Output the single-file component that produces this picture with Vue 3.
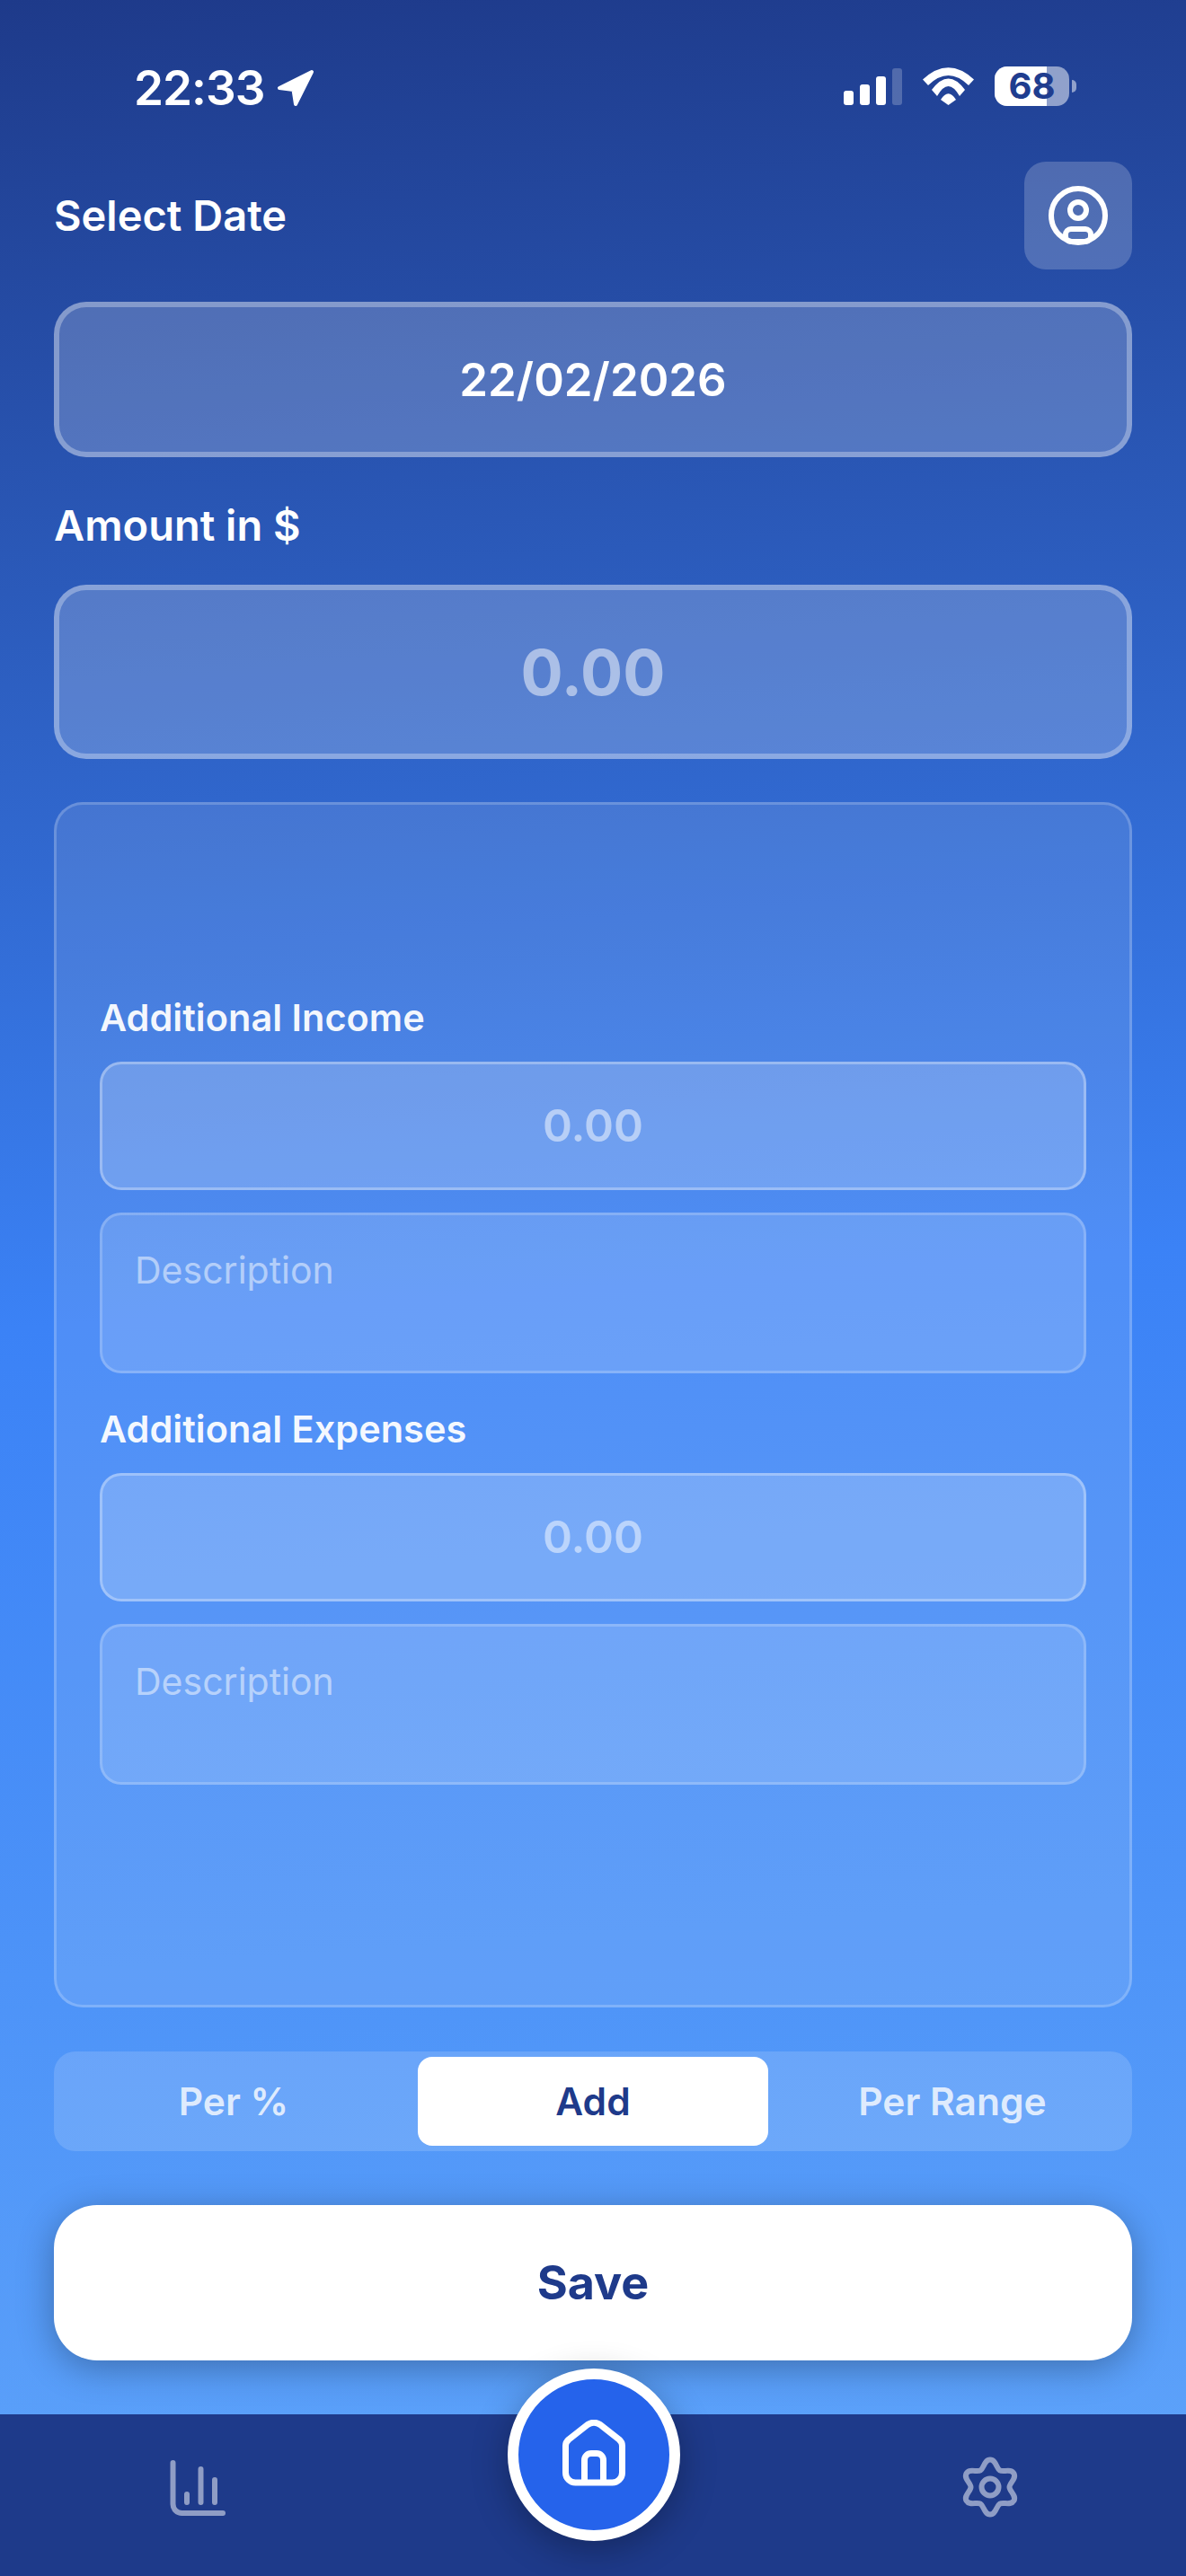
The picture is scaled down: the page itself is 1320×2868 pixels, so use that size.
<script setup>
const points = []
for (let i = 0; i < 12; i++) {
  const angle = (-90 + i * 30) * Math.PI / 180
  const radius = i % 2 === 0 ? 30.5 : 21.5
  points.push({
    x: 36 + radius * Math.cos(angle),
    y: 36 + radius * Math.sin(angle),
    tx: -Math.sin(angle),
    ty: Math.cos(angle),
    h: i % 2 === 0 ? 6.5 : 4.5
  })
}
const f = (n) => n.toFixed(2)
let gearPath = `M${f(points[0].x)} ${f(points[0].y)}`
for (let i = 0; i < 12; i++) {
  const a = points[i]
  const b = points[(i + 1) % 12]
  gearPath += `C${f(a.x + a.tx * a.h)} ${f(a.y + a.ty * a.h)} ${f(b.x - b.tx * b.h)} ${f(b.y - b.ty * b.h)} ${f(b.x)} ${f(b.y)}`
}
gearPath += 'Z'

const modes = [
  { label: 'Per %', active: false },
  { label: 'Add', active: true },
  { label: 'Per Range', active: false }
]
const extras = [
  { title: 'Additional Income' },
  { title: 'Additional Expenses' }
]
</script>

<template>
  <div class="screen">
    <div class="main">
      <header class="status">
        <div class="status-left">
          <span class="time">22:33</span>
          <svg class="arrow" width="44" height="44" viewBox="0 0 44 44">
            <path d="M40 4L4 22L19.5 24L22 40Z" fill="#fff" stroke="#fff" stroke-width="4" stroke-linejoin="round" />
          </svg>
        </div>
        <div class="status-right">
          <div class="signal">
            <i class="bar b1"></i><i class="bar b2"></i><i class="bar b3"></i><i class="bar b4"></i>
          </div>
          <svg class="wifi" width="57" height="42" viewBox="0 0 57 42" fill="#fff">
            <path d="M0 13.5Q28.5-13 57 13.5L51 20Q28.5-2 6 20Z" />
            <path d="M10 25Q28.5 0 47 25L41 32Q28.5 10 16 32Z" />
            <path d="M20 36Q28.5 22.600 37 36L28.500 42Z" />
          </svg>
          <div class="battery">
            <div class="battery-body">
              <div class="battery-fill"></div>
              <span class="battery-text">68</span>
            </div>
            <div class="battery-nub"></div>
          </div>
        </div>
      </header>

      <div class="title-row">
        <span class="label">Select Date</span>
        <button class="profile" aria-label="Profile">
          <svg width="72" height="72" viewBox="0 0 72 72" fill="none" stroke="#fff" stroke-width="6">
            <circle cx="36" cy="36" r="30" />
            <circle cx="36" cy="30" r="9" />
            <rect x="22" y="51" width="28" height="14" rx="6" />
          </svg>
        </button>
      </div>

      <div class="field date">22/02/2026</div>
      <div class="label amount-label">Amount in $</div>
      <div class="field amount">0.00</div>

      <section class="card">
        <div v-for="extra in extras" :key="extra.title" class="extra">
          <div class="extra-title">{{ extra.title }}</div>
          <div class="small-input">0.00</div>
          <div class="description">Description</div>
        </div>
      </section>

      <div class="segments">
        <div v-for="mode in modes" :key="mode.label" class="segment" :class="{ active: mode.active }">{{ mode.label }}</div>
      </div>

      <button class="save">Save</button>
    </div>

    <nav class="tabbar">
      <svg class="tab-icon" width="72" height="72" viewBox="0 0 72 72" fill="none" stroke="#fff" stroke-opacity=".5" stroke-width="6" stroke-linecap="round">
        <path d="M6.500 9V55A10 10 0 0 0 16.500 65H62" />
        <path d="M22 44V53M37.500 16V53M53 28V53" />
      </svg>
      <button class="home" aria-label="Home">
        <svg width="72" height="74" viewBox="0 0 72 74" fill="none" stroke="#fff" stroke-width="7" stroke-linejoin="round">
          <path d="M4.500 29Q4.500 25 8 22L29 5.500Q36 1 43 5.500L64 22Q67.500 25 67.500 29V59A11 11 0 0 1 56.500 70H15.500A11 11 0 0 1 4.500 59Z" />
          <path d="M25.500 70V45A7.500 7.500 0 0 1 33 37.500H39A7.500 7.500 0 0 1 46.500 45V70" />
        </svg>
      </button>
      <svg class="tab-icon" width="72" height="72" viewBox="0 0 72 72" fill="none" stroke="#fff" stroke-opacity=".5" stroke-width="6">
        <path :d="gearPath" />
        <circle cx="36" cy="36" r="9.500" />
      </svg>
    </nav>
  </div>
</template>

<style>
html, body { margin: 0; padding: 0; }
</style>

<style scoped>
.screen {
  width: 1320px;
  height: 2868px;
  display: flex;
  flex-direction: column;
  font-family: Inter, "Liberation Sans", sans-serif;
  color: #fff;
  overflow: hidden;
  background: linear-gradient(176deg, #1e3a8a 0%, #3b82f6 50%, #60a5fa 100%);
}
.main {
  flex: 1;
  padding: 0 60px;
  display: flex;
  flex-direction: column;
}
.status {
  height: 180px;
  display: flex;
  justify-content: space-between;
  box-sizing: border-box;
  padding: 74px 62px 0 89px;
}
.status-left { display: flex; align-items: flex-start; gap: 13px; }
.time {
  font-size: 53px;
  line-height: 48px;
  font-weight: 600;
  letter-spacing: -1px;
}
.arrow { margin-top: 2px; }
.status-right { display: flex; align-items: flex-start; }
.signal {
  display: flex;
  align-items: flex-end;
  gap: 7px;
  height: 41px;
  margin: 2px 23px 0 0;
}
.bar { display: block; width: 11px; background: #fff; border-radius: 3px; }
.b1 { height: 16px; }
.b2 { height: 23px; }
.b3 { height: 32px; }
.b4 { height: 41px; opacity: .22; }
.wifi { margin: 1px 23px 0 0; }
.battery { display: flex; align-items: center; }
.battery-body {
  position: relative;
  width: 83px;
  height: 44px;
  border-radius: 14px;
  background: rgba(255,255,255,.5);
  display: flex;
  align-items: center;
  justify-content: center;
}
.battery-fill {
  position: absolute;
  left: 0;
  top: 0;
  bottom: 0;
  width: 58px;
  border-radius: 14px 0 0 14px;
  background: #fff;
}
.battery-text {
  position: relative;
  font-size: 40px;
  font-weight: 700;
  color: #1f3d8f;
  line-height: 44px;
}
.battery-nub {
  width: 5px;
  height: 14px;
  margin-left: 3px;
  border-radius: 0 5px 5px 0;
  background: rgba(255,255,255,.5);
}
.title-row {
  height: 120px;
  display: flex;
  justify-content: space-between;
  align-items: center;
}
.label {
  font-size: 47px;
  line-height: 56px;
  font-weight: 600;
}
.profile {
  width: 120px;
  height: 120px;
  padding: 0;
  border: 0;
  border-radius: 24px;
  background: rgba(255,255,255,.2);
  display: flex;
  align-items: center;
  justify-content: center;
}
.field {
  box-sizing: border-box;
  display: flex;
  align-items: center;
  justify-content: center;
  border: 6px solid rgba(255,255,255,.3);
  border-radius: 36px;
  background: rgba(255,255,255,.2);
}
.date {
  height: 173px;
  margin-top: 36px;
  font-size: 51px;
  font-weight: 600;
}
.amount-label { margin-top: 48px; }
.amount {
  height: 194px;
  margin-top: 38px;
  font-size: 70px;
  font-weight: 700;
  color: rgba(255,255,255,.5);
}
.card {
  box-sizing: border-box;
  height: 1342px;
  margin-top: 48px;
  padding: 0 48px 35px;
  border: 3px solid rgba(255,255,255,.2);
  border-radius: 32px;
  background: rgba(255,255,255,.1);
  display: flex;
  flex-direction: column;
  justify-content: center;
  gap: 36px;
}
.extra { display: flex; flex-direction: column; }
.extra-title {
  font-size: 41.5px;
  line-height: 52px;
  font-weight: 600;
  color: rgba(255,255,255,.95);
  margin-bottom: 23px;
}
.small-input {
  box-sizing: border-box;
  height: 143px;
  display: flex;
  align-items: center;
  justify-content: center;
  font-size: 50px;
  font-weight: 600;
  color: rgba(255,255,255,.5);
  border: 3px solid rgba(255,255,255,.3);
  border-radius: 24px;
  background: rgba(255,255,255,.2);
}
.description {
  box-sizing: border-box;
  height: 179px;
  margin-top: 25px;
  padding: 36px 36px 0;
  font-size: 41px;
  line-height: 50px;
  color: rgba(255,255,255,.5);
  border: 3px solid rgba(255,255,255,.2);
  border-radius: 24px;
  background: rgba(255,255,255,.15);
}
.segments {
  box-sizing: border-box;
  height: 111px;
  margin-top: 49px;
  display: grid;
  grid-template-columns: repeat(3, 1fr);
  border-radius: 24px;
  background: rgba(255,255,255,.15);
}
.segment {
  display: flex;
  align-items: center;
  justify-content: center;
  border-radius: 16px;
  font-size: 42.5px;
  font-weight: 600;
  color: rgba(255,255,255,.8);
}
.segment.active { margin: 6px 5px; background: #fff; color: #1e3a8a; }
.save {
  height: 173px;
  margin-top: 60px;
  padding: 0;
  border: 0;
  border-radius: 48px;
  background: #fff;
  color: #1e3a8a;
  font-family: inherit;
  font-size: 52px;
  font-weight: 700;
  box-shadow: 0 8px 40px rgba(0,0,0,.3);
}
.tabbar {
  position: relative;
  height: 180px;
  flex: none;
  background: #1e3a8a;
  display: flex;
  justify-content: space-between;
  align-items: flex-start;
  padding: 45px 182px 0 186px;
  box-sizing: border-box;
}
.home {
  position: absolute;
  left: 565px;
  top: -51px;
  width: 192px;
  height: 192px;
  box-sizing: border-box;
  padding: 0 0 4px;
  border: 12px solid #fff;
  border-radius: 50%;
  background: #2563eb;
  display: flex;
  align-items: center;
  justify-content: center;
  box-shadow: 0 10px 40px rgba(0,0,0,.3);
}
</style>
